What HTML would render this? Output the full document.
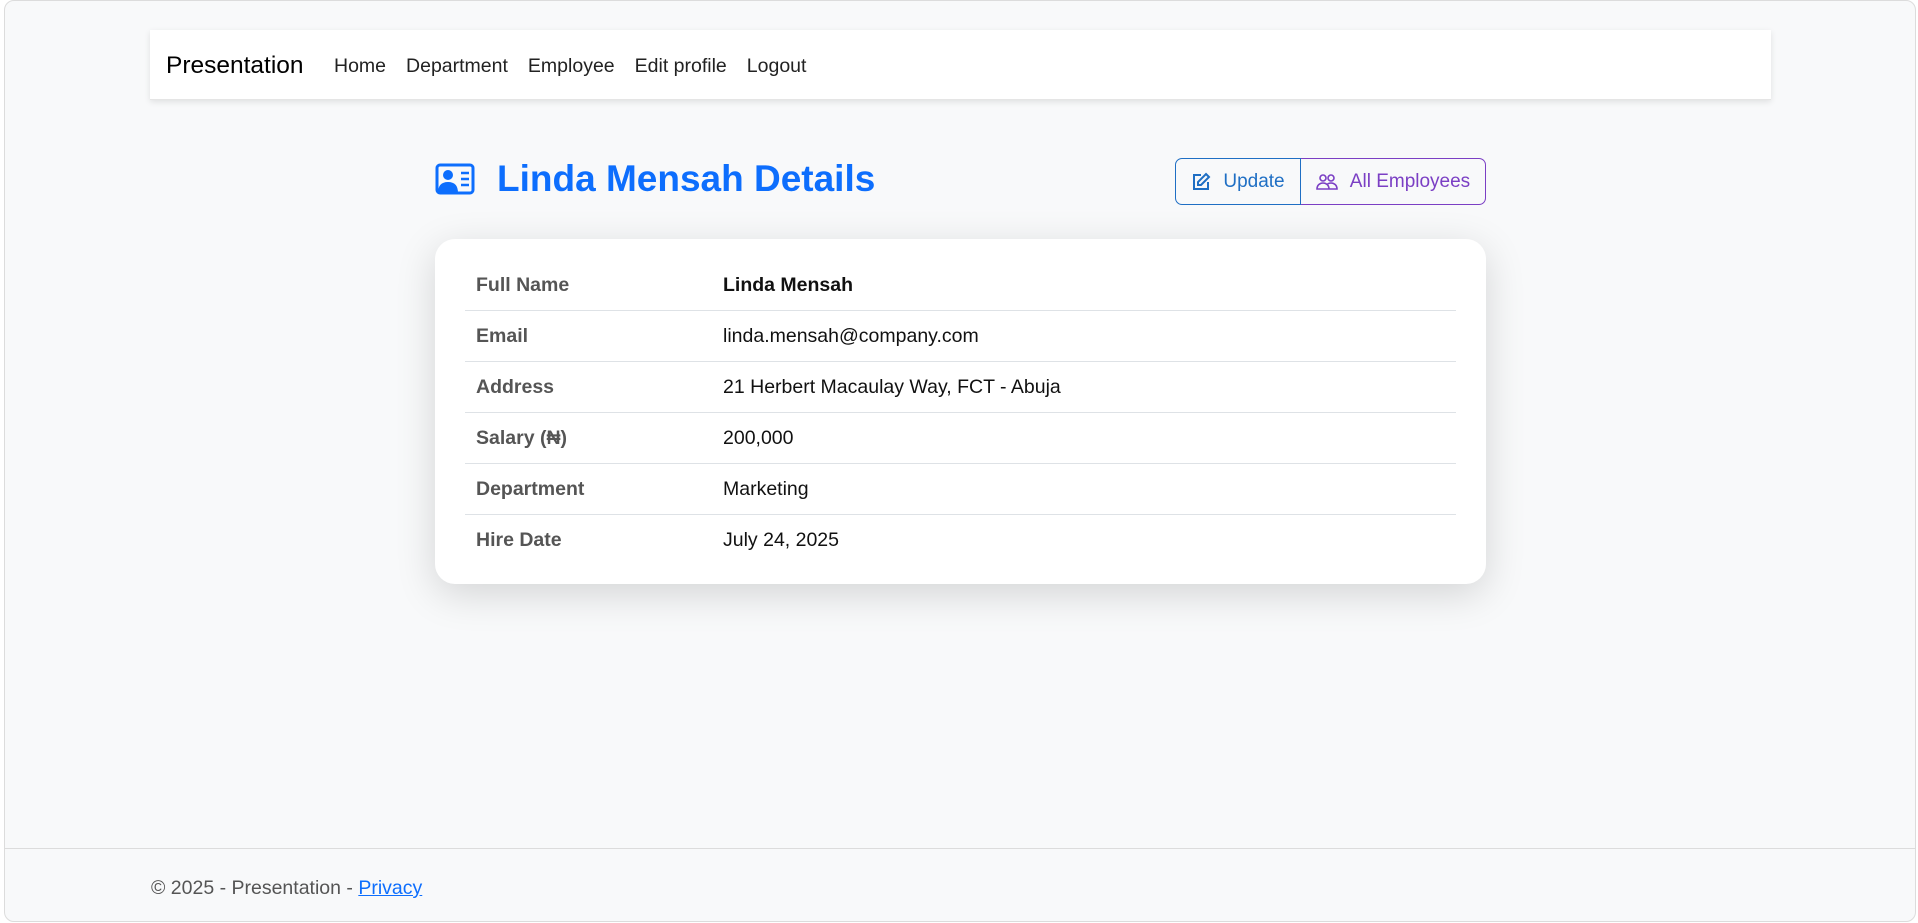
<!DOCTYPE html>
<html><head><meta charset="utf-8"><style>
*{box-sizing:border-box;margin:0;padding:0}
html,body{width:1918px;height:923px;overflow:hidden;background:#fff;font-family:"Liberation Sans",sans-serif}
.frame{position:absolute;left:4px;top:0;width:1912px;height:922px;border:1px solid #dcdcdc;border-radius:10px;background:#f8f9fa;overflow:hidden}
.nav{position:absolute;left:145px;top:29px;width:1621px;height:70px;background:#fff;box-shadow:0 2px 6px rgba(0,0,0,.1);border-bottom:1px solid #e5e5e5}
.brand{position:absolute;left:16px;top:22px;font-size:24.5px;color:#000}
.links{position:absolute;left:184px;top:25px;font-size:19.5px;color:#222;white-space:nowrap}
.links span{margin-right:20px}
.title{position:absolute;left:430px;top:157px;color:#0d6efd;font-size:37px;font-weight:bold;display:flex;align-items:center}
.title svg{margin-right:22px}
.btns{position:absolute;left:1170px;top:157px;height:47px;display:flex;font-size:19px}
.b1{border:1px solid #1f6fc4;border-radius:7px 0 0 7px;color:#1f6fc4;width:126px;display:flex;align-items:center;justify-content:center;gap:12px}
.b2{border:1px solid #7b3fc4;border-left:none;border-radius:0 7px 7px 0;color:#7b3fc4;width:185px;display:flex;align-items:center;justify-content:center;gap:12px}
.card{position:absolute;left:430px;top:238px;width:1051px;height:345px;background:#fff;border-radius:20px;box-shadow:0 10px 40px rgba(0,0,0,.15);padding:21px 30px}
.row{height:51px;border-bottom:1px solid #dee2e6;display:flex;align-items:center;font-size:19.5px}
.row:last-child{border-bottom:none}
.row .l{width:258px;padding-left:11px;font-weight:bold;color:#555}
.row .v{color:#111}
.foot{position:absolute;left:0;top:847px;width:100%;border-top:1px solid #dcdcdc}
.foot p{position:absolute;left:146px;top:28px;font-size:19.5px;color:#555;white-space:nowrap}
.foot a{color:#0d6efd;text-decoration:underline}
</style></head><body>
<div class="frame">
<div class="nav"><div class="brand">Presentation</div>
<div class="links"><span>Home</span><span>Department</span><span>Employee</span><span>Edit profile</span><span>Logout</span></div></div>
<div class="title"><svg width="40" height="32" viewBox="0 0 40 32"><rect x="2" y="2" width="36" height="28" rx="3" fill="none" stroke="#0d6efd" stroke-width="3"/><circle cx="13" cy="12" r="5" fill="#0d6efd"/><path d="M3 30 Q3 19 13 19 Q23 19 23 30Z" fill="#0d6efd"/><path d="M26 10h8M26 16h8M26 22h8" stroke="#0d6efd" stroke-width="2.5"/></svg>Linda Mensah Details</div>
<div class="btns"><div class="b1"><svg width="20" height="20" viewBox="0 0 20 20" fill="none" stroke="#1f6fc4" stroke-width="2"><path d="M10 3H3v14h14v-7"/><path d="M15 2l3 3-8 8H7v-3z"/></svg>Update</div>
<div class="b2"><svg width="22" height="20" viewBox="0 0 22 20" fill="none" stroke="#7b3fc4" stroke-width="1.6"><circle cx="7" cy="6" r="3"/><circle cx="15" cy="6" r="3"/><path d="M1 17c0-4 3-6 6-6s6 2 6 6zM11 17h10c0-4-3-6-6-6-1.5 0-2.5.4-3.5 1"/></svg>All Employees</div></div>
<div class="card">
<div class="row"><div class="l">Full Name</div><div class="v" style="font-weight:bold">Linda Mensah</div></div>
<div class="row"><div class="l">Email</div><div class="v">linda.mensah@company.com</div></div>
<div class="row"><div class="l">Address</div><div class="v">21 Herbert Macaulay Way, FCT - Abuja</div></div>
<div class="row"><div class="l">Salary (₦)</div><div class="v">200,000</div></div>
<div class="row"><div class="l">Department</div><div class="v">Marketing</div></div>
<div class="row"><div class="l">Hire Date</div><div class="v">July 24, 2025</div></div>
</div>
<div class="foot"><p>© 2025 - Presentation - <a>Privacy</a></p></div>
</div>
</body></html>
